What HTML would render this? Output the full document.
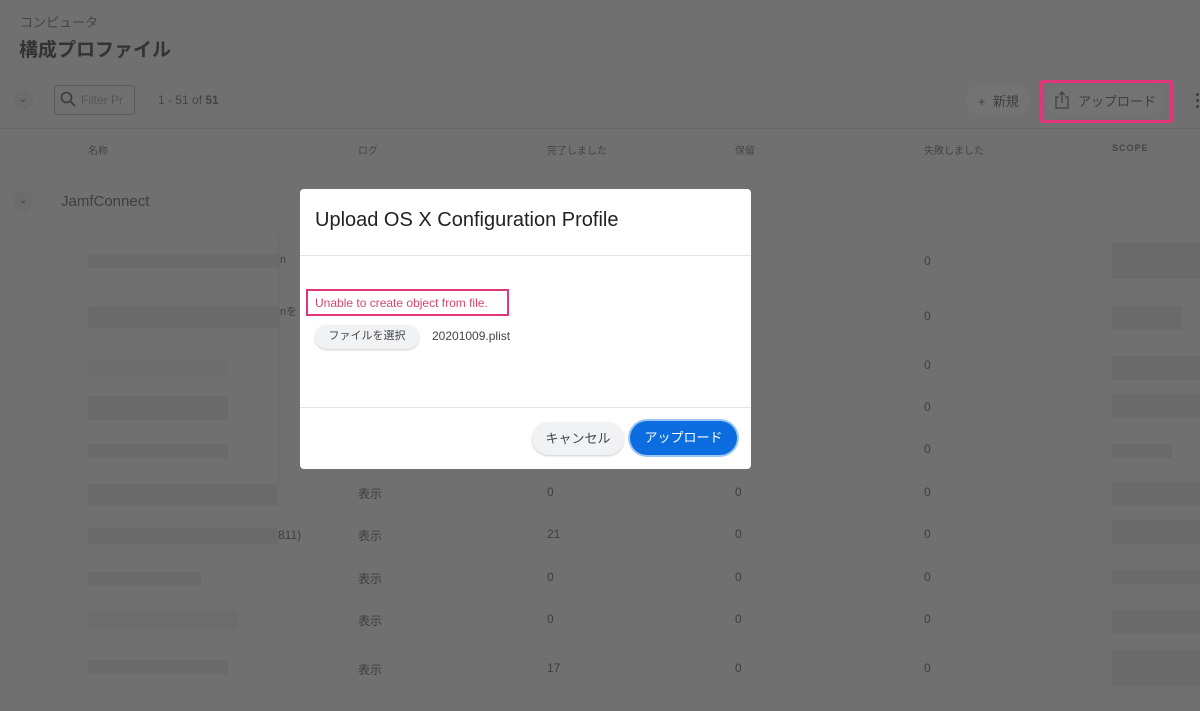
<!DOCTYPE html>
<html><head><meta charset="utf-8"><style>
*{margin:0;padding:0;box-sizing:border-box}
body{width:1200px;height:711px;overflow:hidden;background:#707070;font-family:"Liberation Sans","Noto Sans CJK JP",sans-serif;color:#3e3e3e;position:relative}
.a{position:absolute;white-space:nowrap}
.bar{position:absolute;background:#6a6a6a;height:14px;border-radius:2px}
.sb{position:absolute;background:#6a6a6a;left:1112px;width:88px;height:24px}
.dlg{position:absolute;left:300px;top:189px;width:451px;height:280px;background:#fff;border-radius:4px}
</style></head><body>
<div class="a" style="left:20px;top:12px;font-size:13px;color:#454545">コンピュータ</div>
<div class="a" style="left:19px;top:35px;font-size:19px;font-weight:bold;color:#333">構成プロファイル</div>
<div class="a" style="left:13px;top:90px;width:20px;height:20px;border-radius:50%;background:#6c6c6c;font-size:10px;text-align:center;line-height:20px">⌄</div>
<div class="a" style="left:54px;top:85px;width:81px;height:30px;border:1px solid #5a5a5a;border-radius:3px"></div>
<svg class="a" style="left:60px;top:91px" width="16" height="16" viewBox="0 0 16 16"><circle cx="6.5" cy="6.5" r="5" fill="none" stroke="#3a3a3a" stroke-width="1.6"/><path d="M10 10l5 5" stroke="#3a3a3a" stroke-width="1.6"/></svg>
<div class="a" style="left:81px;top:93px;font-size:12px;color:#555">Filter Pr</div>
<div class="a" style="left:158px;top:93px;font-size:12px;color:#444">1 - 51 of <b>51</b></div>
<div class="a" style="left:966px;top:85px;width:65px;height:30px;border-radius:15px;background:#737373"></div>
<div class="a" style="left:978px;top:91px;font-size:13px;color:#3e3e3e">+ &nbsp;新規</div>
<div class="a" style="left:1044px;top:85px;width:121px;height:30px;border-radius:15px;background:#737373"></div>
<svg class="a" style="left:1054px;top:91px" width="16" height="18" viewBox="0 0 16 18"><path d="M5 6H2v11h12V6h-3M8 12V1M5 4l3-3 3 3" fill="none" stroke="#3e3e3e" stroke-width="1.2"/></svg>
<div class="a" style="left:1078px;top:91px;font-size:13px;color:#3e3e3e">アップロード</div>
<div class="a" style="left:1040px;top:80px;width:133px;height:43px;border:3px solid #e0377a;border-radius:2px"></div>
<div class="a" style="left:1196px;top:93px;width:3px;height:3px;background:#3e3e3e;border-radius:50%"></div>
<div class="a" style="left:1196px;top:99px;width:3px;height:3px;background:#3e3e3e;border-radius:50%"></div>
<div class="a" style="left:1196px;top:105px;width:3px;height:3px;background:#3e3e3e;border-radius:50%"></div>
<div class="a" style="left:0;top:128px;width:1200px;height:1px;background:#666"></div>
<div class="a" style="left:88px;top:142px;font-size:10px;color:#444">名称</div>
<div class="a" style="left:358px;top:142px;font-size:10px;color:#444">ログ</div>
<div class="a" style="left:547px;top:142px;font-size:10px;color:#444">完了しました</div>
<div class="a" style="left:735px;top:142px;font-size:10px;color:#444">保留</div>
<div class="a" style="left:924px;top:142px;font-size:10px;color:#444">失敗しました</div>
<div class="a" style="left:1112px;top:143px;font-size:9px;color:#444;letter-spacing:1px;font-weight:bold">SCOPE</div>
<div class="a" style="left:13px;top:191px;width:20px;height:20px;border-radius:50%;background:#6c6c6c;font-size:10px;text-align:center;line-height:20px">⌄</div>
<div class="a" style="left:61px;top:193px;font-size:15px;color:#3e3e3e">JamfConnect</div>
<div class="a" style="left:278px;top:236px;width:1px;height:250px;background:#666"></div>
<div class="bar" style="left:88px;top:254px;width:192px"></div><div class="a" style="left:280px;top:254px;font-size:11px">n</div>
<div class="bar" style="left:88px;top:306px;width:192px;height:22px"></div><div class="a" style="left:280px;top:303px;font-size:11px">nを</div>
<div class="bar" style="left:88px;top:360px;width:140px;height:22px;background:#6e6e6e"></div>
<div class="bar" style="left:88px;top:396px;width:140px;height:24px"></div>
<div class="bar" style="left:88px;top:444px;width:140px"></div>
<div class="bar" style="left:88px;top:484px;width:190px;height:22px"></div>
<div class="bar" style="left:88px;top:528px;width:190px;height:16px"></div><div class="a" style="left:278px;top:528px;font-size:12px">811)</div>
<div class="bar" style="left:88px;top:572px;width:113px"></div>
<div class="bar" style="left:88px;top:610px;width:150px;height:20px;background:#6d6d6d"></div>
<div class="bar" style="left:88px;top:660px;width:140px"></div>
<div class="sb" style="top:243px;height:36px"></div><div class="sb" style="top:306px;width:70px"></div><div class="sb" style="top:356px"></div><div class="sb" style="top:394px"></div><div class="sb" style="top:444px;width:60px;height:14px"></div><div class="sb" style="top:482px"></div><div class="sb" style="top:520px"></div><div class="sb" style="top:570px;height:14px"></div><div class="sb" style="top:610px"></div><div class="sb" style="top:650px;height:36px"></div>
<div class="a" style="left:924px;top:254px;font-size:12px">0</div>
<div class="a" style="left:924px;top:309px;font-size:12px">0</div>
<div class="a" style="left:924px;top:358px;font-size:12px">0</div>
<div class="a" style="left:924px;top:400px;font-size:12px">0</div>
<div class="a" style="left:924px;top:442px;font-size:12px">0</div>
<div class="a" style="left:358px;top:485px;font-size:12px">表示</div><div class="a" style="left:547px;top:485px;font-size:12px">0</div><div class="a" style="left:735px;top:485px;font-size:12px">0</div><div class="a" style="left:924px;top:485px;font-size:12px">0</div>
<div class="a" style="left:358px;top:527px;font-size:12px">表示</div><div class="a" style="left:547px;top:527px;font-size:12px">21</div><div class="a" style="left:735px;top:527px;font-size:12px">0</div><div class="a" style="left:924px;top:527px;font-size:12px">0</div>
<div class="a" style="left:358px;top:570px;font-size:12px">表示</div><div class="a" style="left:547px;top:570px;font-size:12px">0</div><div class="a" style="left:735px;top:570px;font-size:12px">0</div><div class="a" style="left:924px;top:570px;font-size:12px">0</div>
<div class="a" style="left:358px;top:612px;font-size:12px">表示</div><div class="a" style="left:547px;top:612px;font-size:12px">0</div><div class="a" style="left:735px;top:612px;font-size:12px">0</div><div class="a" style="left:924px;top:612px;font-size:12px">0</div>
<div class="a" style="left:358px;top:661px;font-size:12px">表示</div><div class="a" style="left:547px;top:661px;font-size:12px">17</div><div class="a" style="left:735px;top:661px;font-size:12px">0</div><div class="a" style="left:924px;top:661px;font-size:12px">0</div>
<div class="dlg">
<div class="a" style="left:15px;top:20px;font-size:20px;color:#222">Upload OS X Configuration Profile</div>
<div class="a" style="left:0;top:66px;width:451px;height:1px;background:#e4e4e4"></div>
<div class="a" style="left:6px;top:100px;width:203px;height:27px;border:2px solid #e0377a"></div>
<div class="a" style="left:15px;top:107px;font-size:12px;color:#d9466b">Unable to create object from file.</div>
<div class="a" style="left:15px;top:136px;width:104px;height:24px;border-radius:12px;background:#f1f2f4;box-shadow:0 1px 2px rgba(0,0,0,.2);font-size:11px;color:#444;text-align:center;line-height:22px">ファイルを選択</div>
<div class="a" style="left:132px;top:140px;font-size:12px;color:#444">20201009.plist</div>
<div class="a" style="left:0;top:218px;width:451px;height:1px;background:#e4e4e4"></div>
<div class="a" style="left:232px;top:233px;width:92px;height:33px;border-radius:17px;background:#f1f2f4;box-shadow:0 1px 2px rgba(0,0,0,.2);font-size:13px;color:#444;text-align:center;line-height:33px">キャンセル</div>
<div class="a" style="left:330px;top:232px;width:107px;height:34px;border-radius:17px;background:#0b6de0;box-shadow:0 0 0 2px #9cc6f5;font-size:13px;color:#fff;text-align:center;line-height:34px">アップロード</div>
</div>
</body></html>
